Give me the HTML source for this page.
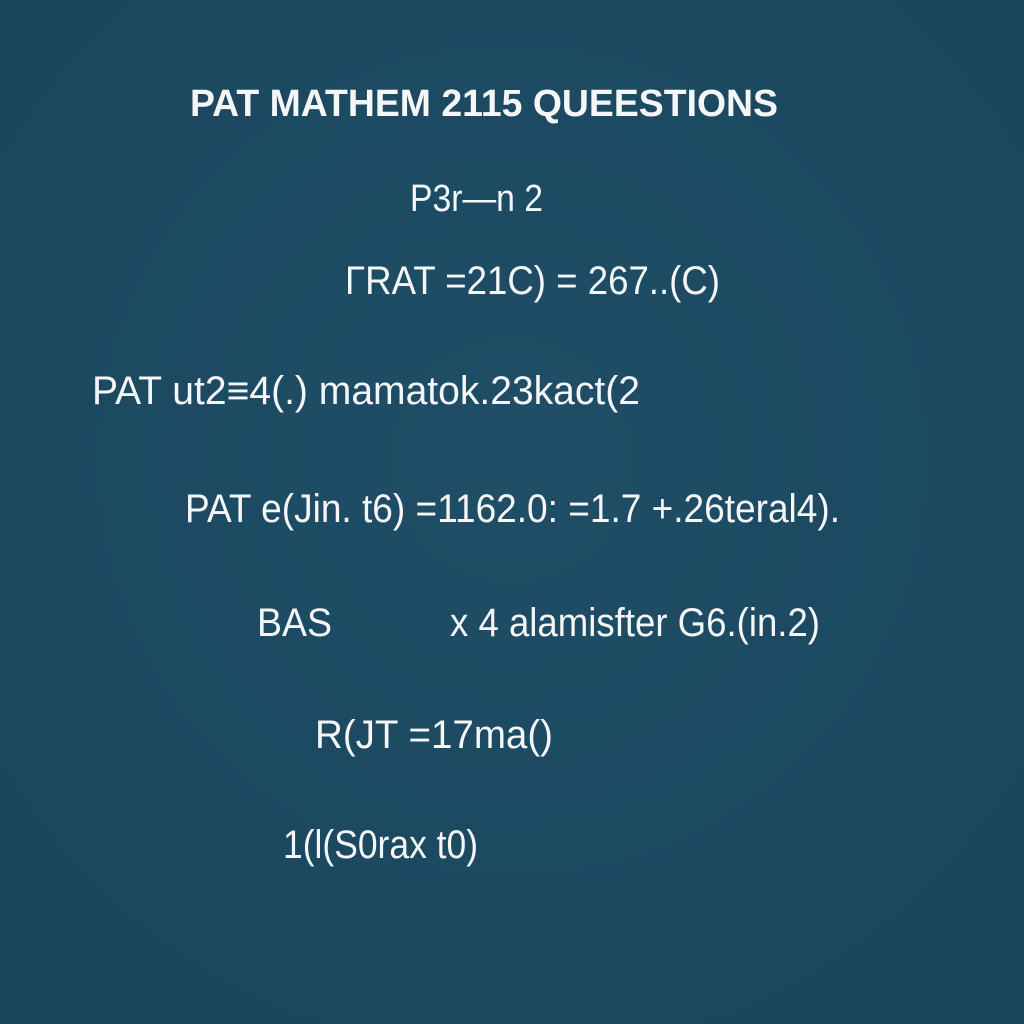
<!DOCTYPE html>
<html><head><meta charset="utf-8"><style>
html,body{margin:0;padding:0;width:1024px;height:1024px;overflow:hidden;background:#1d4b63}
svg{display:block}
text{font-family:"Liberation Sans",sans-serif;fill:#f4f6f7}
</style></head><body>
<svg width="1024" height="1024" viewBox="0 0 1024 1024">
<defs><radialGradient id="g" cx="50%" cy="45%" r="70%"><stop offset="0" stop-color="#1f4e66"/><stop offset="1" stop-color="#1a465d"/></radialGradient></defs>
<rect width="1024" height="1024" fill="url(#g)"/>
<text x="190" y="116" font-size="38" font-weight="bold" textLength="588" lengthAdjust="spacingAndGlyphs">PAT MATHEM 2115 QUEESTIONS</text>
<text x="410" y="211" font-size="38" textLength="133" lengthAdjust="spacingAndGlyphs">P3r—n 2</text>
<text x="345" y="294" font-size="40" textLength="375" lengthAdjust="spacingAndGlyphs">ΓRAT =21C) = 267..(C)</text>
<text x="92" y="404" font-size="40" textLength="548" lengthAdjust="spacingAndGlyphs">PAT  ut2≡4(.) mamatok.23kact(2</text>
<text x="185" y="522" font-size="40" textLength="655" lengthAdjust="spacingAndGlyphs">PAT  e(Jin. t6) =1162.0: =1.7 +.26teral4).</text>
<text x="257" y="636" font-size="40" textLength="75" lengthAdjust="spacingAndGlyphs">BAS</text>
<text x="450" y="636" font-size="40" textLength="370" lengthAdjust="spacingAndGlyphs">x 4 alamisfter G6.(in.2)</text>
<text x="315" y="748" font-size="40" textLength="238" lengthAdjust="spacingAndGlyphs">R(JT =17ma()</text>
<text x="283" y="858" font-size="40" textLength="195" lengthAdjust="spacingAndGlyphs">1(l(S0rax t0)</text>
</svg>
</body></html>
